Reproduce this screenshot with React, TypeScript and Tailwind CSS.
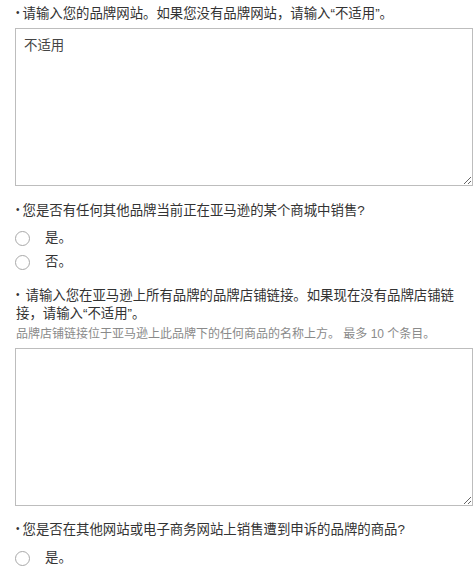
import React from "react";

const fontClass = "font-['Liberation_Sans','Noto_Sans_CJK_SC',sans-serif]";

function Question({
  children,
  className = "",
  wide = false,
}: {
  children: React.ReactNode;
  className?: string;
  wide?: boolean;
}) {
  return (
    <p className={`pl-[1px] text-[13.4px] text-[#333] ${className}`}>
      <span className={`inline-block text-[10px] leading-none align-[2px] ${wide ? "mr-[6px]" : "mr-[3px]"}`}>•</span>
      {children}
    </p>
  );
}

function Radio({ label }: { label: string }) {
  return (
    <label className="flex h-[24px] items-center">
      <span className="h-[15px] w-[15px] rounded-full border border-[#a9a9a9] bg-white" />
      <span className="ml-[15px] text-[13.4px] text-[#333]">{label}</span>
    </label>
  );
}

function Box({ value = "" }: { value?: string }) {
  return (
    <textarea
      defaultValue={value}
      className={`block h-[158px] w-[458px] border border-[#bdbdbd] bg-white px-[8px] pt-[7px] text-[13.4px] leading-[20px] text-[#444] outline-none ${fontClass}`}
    />
  );
}

export default function App() {
  return (
    <div className={`min-h-[569px] w-[473px] overflow-hidden bg-white pl-[15px] pt-[4px] ${fontClass}`}>
      <Question className="leading-[19px]">请输入您的品牌网站。如果您没有品牌网站，请输入“不适用”。</Question>
      <div className="mt-[5px]">
        <Box value="不适用" />
      </div>

      <Question className="mt-[15px] leading-[19px]">
        您是否有任何其他品牌当前正在亚马逊的某个商城中销售?
      </Question>
      <div className="mt-[6px]">
        <Radio label="是。" />
        <Radio label="否。" />
      </div>

      <Question wide className="mt-[13px] pr-[12px] leading-[18px]">
        请输入您在亚马逊上所有品牌的品牌店铺链接。如果现在没有品牌店铺链接，请输入“不适用”。
      </Question>
      <p className="mt-[2px] pl-[1px] text-[12px] leading-[18px] text-[#8a8a8a]">
        品牌店铺链接位于亚马逊上此品牌下的任何商品的名称上方。 最多 10 个条目。
      </p>
      <div className="mt-[5px]">
        <Box />
      </div>

      <Question className="mt-[14px] leading-[19px]">
        您是否在其他网站或电子商务网站上销售遭到申诉的品牌的商品?
      </Question>
      <div className="mt-[7px]">
        <Radio label="是。" />
      </div>
    </div>
  );
}
